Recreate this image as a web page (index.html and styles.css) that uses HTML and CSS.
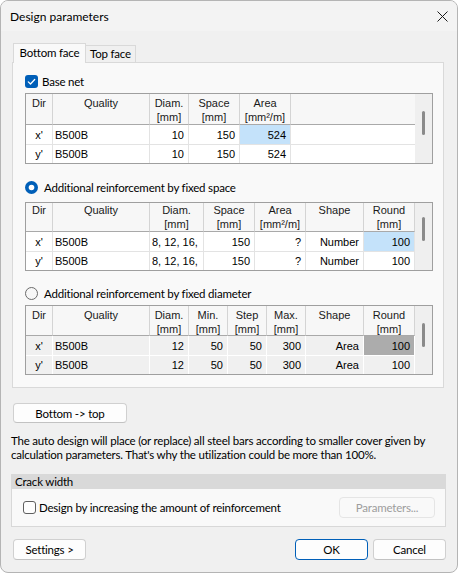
FILE: index.html
```html
<!DOCTYPE html>
<html>
<head>
<meta charset="utf-8">
<link rel="stylesheet" href="styles.css">
</head>
<body>
<div class="window">
  <div class="titlebar">
    <span class="title">Design parameters</span>
    <svg class="close" width="11" height="11" viewBox="0 0 11 11"><path d="M0.5 0.5 L10.5 10.5 M10.5 0.5 L0.5 10.5" stroke="#1a1a1a" stroke-width="1" fill="none"/></svg>
  </div>
  <div class="content">
    <div class="tabs">
      <div class="tab active">Bottom face</div>
      <div class="tab">Top face</div>
    </div>
    <div class="panel">
      <div class="opt opt-base">
        <span class="cb on"><svg width="13" height="13" viewBox="0 0 13 13"><path d="M3.3 6.9 L5.5 9 L9.7 4.5" stroke="#fff" stroke-width="1.3" fill="none" stroke-linecap="round" stroke-linejoin="round"/></svg></span>
        <span>Base net</span>
      </div>
      <div class="grid t1">
        <div class="sb"><div class="thumb"></div></div>
        <div class="h">Dir</div><div class="h">Quality</div><div class="h">Diam.<br>[mm]</div><div class="h">Space<br>[mm]</div><div class="h">Area<br>[mm²/m]</div><div class="h fill"></div>
        <div class="c ctr">x'</div><div class="c q">B500B</div><div class="c r">10</div><div class="c r">150</div><div class="c r sel">524</div><div class="c fill"></div>
        <div class="c ctr lr">y'</div><div class="c q lr">B500B</div><div class="c r lr">10</div><div class="c r lr">150</div><div class="c r lr">524</div><div class="c fill lr"></div>
      </div>
      <div class="opt opt-r1">
        <svg class="radio" width="13" height="13" viewBox="0 0 13 13"><circle cx="6.5" cy="6.5" r="6.5" fill="#005fb8"/><circle cx="6.5" cy="6.5" r="2.8" fill="#fff"/></svg>
        <span>Additional reinforcement by fixed space</span>
      </div>
      <div class="grid t2">
        <div class="sb"><div class="thumb"></div></div>
        <div class="h">Dir</div><div class="h">Quality</div><div class="h">Diam.<br>[mm]</div><div class="h">Space<br>[mm]</div><div class="h">Area<br>[mm²/m]</div><div class="h">Shape</div><div class="h">Round<br>[mm]</div>
        <div class="c ctr">x'</div><div class="c q">B500B</div><div class="c q">8, 12, 16,</div><div class="c r">150</div><div class="c r">?</div><div class="c r">Number</div><div class="c r sel">100</div>
        <div class="c ctr lr">y'</div><div class="c q lr">B500B</div><div class="c q lr">8, 12, 16,</div><div class="c r lr">150</div><div class="c r lr">?</div><div class="c r lr">Number</div><div class="c r lr">100</div>
      </div>
      <div class="opt opt-r2">
        <svg class="radio" width="13" height="13" viewBox="0 0 13 13"><circle cx="6.5" cy="6.5" r="6" fill="#f7f7f7" stroke="#6b6b6b" stroke-width="1"/></svg>
        <span>Additional reinforcement by fixed diameter</span>
      </div>
      <div class="grid t3">
        <div class="sb"><div class="thumb"></div></div>
        <div class="h">Dir</div><div class="h">Quality</div><div class="h">Diam.<br>[mm]</div><div class="h">Min.<br>[mm]</div><div class="h">Step<br>[mm]</div><div class="h">Max.<br>[mm]</div><div class="h">Shape</div><div class="h">Round<br>[mm]</div>
        <div class="c ctr">x'</div><div class="c q">B500B</div><div class="c r">12</div><div class="c r">50</div><div class="c r">50</div><div class="c r">300</div><div class="c r">Area</div><div class="c r sel">100</div>
        <div class="c ctr lr">y'</div><div class="c q lr">B500B</div><div class="c r lr">12</div><div class="c r lr">50</div><div class="c r lr">50</div><div class="c r lr">300</div><div class="c r lr">Area</div><div class="c r lr">100</div>
      </div>
    </div>
    <button class="btn btn-bt">Bottom -&gt; top</button>
    <p class="note">The auto design will place (or replace) all steel bars according to smaller cover given by<br>calculation parameters. That's why the utilization could be more than 100%.</p>
    <div class="group">
      <div class="group-head">Crack width</div>
      <div class="group-body">
        <span class="cb off"></span>
        <span class="group-label">Design by increasing the amount of reinforcement</span>
        <button class="btn btn-param" disabled>Parameters...</button>
      </div>
    </div>
    <div class="footer">
      <button class="btn btn-settings">Settings &gt;</button>
      <button class="btn btn-ok">OK</button>
      <button class="btn btn-cancel">Cancel</button>
    </div>
  </div>
</div>
</body>
</html>
```
FILE: styles.css
```css
* { box-sizing: border-box; }
html, body { margin: 0; padding: 0; }
body {
  width: 458px;
  height: 573px;
  background: #ffffff;
  font-family: Lato, "Noto Sans", sans-serif;
  font-size: 12px;
  color: #000;
}
.window {
  width: 458px;
  height: 573px;
  border: 1px solid #b4b4b4;
  border-radius: 8px;
  background: #f0f0f0;
  overflow: hidden;
  display: flex;
  flex-direction: column;
}
.titlebar {
  height: 30px;
  flex: none;
  display: flex;
  align-items: center;
  justify-content: space-between;
  padding: 0 9px 0 9px;
  background: #f3f3f3;
}
.title { font-size: 12px; }
.close { display: block; }
.content {
  padding: 12px 11px 0 10px;
  display: flex;
  flex-direction: column;
  font-size: 11.5px;
  letter-spacing: -0.2px;
}
.tabs {
  display: flex;
  align-items: flex-end;
  height: 19px;
  margin-left: 2px;
  position: relative;
  z-index: 1;
}
.tab {
  display: flex;
  align-items: center;
  justify-content: center;
  border: 1px solid #d9d9d9;
  border-bottom: none;
  background: #f0f0f0;
  height: 17px;
  width: 50px;
  border-left: none;
  padding-bottom: 1px;
}
.tab.active {
  height: 20px;
  width: 73px;
  margin-bottom: -1px;
  background: #f9f9f9;
  border-left: 1px solid #d9d9d9;
  padding-bottom: 2px;
}
.panel {
  margin: 0 2px 0 1px;
  border: 1px solid #d9d9d9;
  background: #f9f9f9;
  padding: 9px 10px 12px 12px;
  display: flex;
  flex-direction: column;
}
.opt {
  display: flex;
  align-items: center;
  height: 18px;
}
.opt-base { gap: 4px; }
.opt-r1 { margin-top: 14px; gap: 6px; }
.opt-r2 { margin-top: 13px; gap: 6px; }
.cb {
  width: 13px;
  height: 13px;
  border-radius: 3px;
  display: inline-block;
  flex: none;
}
.cb svg { display: block; }
.cb.on { background: #005fb8; }
.cb.off { border: 1px solid #5f5f5f; background: #fdfdfd; width: 13px; height: 13px; }
.radio { display: block; flex: none; }

.grid {
  display: grid;
  border: 1px solid #9f9f9f;
  font-family: "Liberation Sans", Arial, sans-serif;
  font-size: 11px;
  letter-spacing: 0;
  background: #fff;
}
.t1 { margin-top: 3px; grid-template-columns: 27px 97px 39px 51px 51px 1fr 17px; grid-template-rows: 31px 20px 18px; }
.t2 { margin-top: 6px; grid-template-columns: 27px 97px 54px 51px 51px 58px 51px 17px; grid-template-rows: 29px 20px 18px; }
.t3 { margin-top: 3px; grid-template-columns: 27px 97px 39px 39px 39px 39px 58px 51px 17px; grid-template-rows: 30px 20px 18px; }
.sb {
  grid-column: -2 / -1;
  grid-row: 1 / -1;
  background: #efefef;
  padding-left: 7px;
}
.thumb {
  width: 3px;
  height: 24px;
  background: #8a8a8a;
  border-radius: 1.5px;
  margin-top: 17px;
}
.t2 .thumb { margin-top: 14px; }
.h {
  background: #f7f7f7;
  border-right: 1px solid #d4d4d4;
  border-bottom: 1px solid #a9a9a9;
  text-align: center;
  line-height: 14px;
  padding-top: 2px;
  color: #1a1a1a;
}
.t2 .h { padding-top: 0; }
.h.fill { border-right: none; }
.c {
  border-right: 1px solid #e3e3e3;
  border-bottom: 1px solid #e3e3e3;
  display: flex;
  align-items: center;
  padding: 0 4px 0 2px;
  white-space: nowrap;
  color: #000;
}
.c.lr { border-bottom: none; }
.c.fill { border-right: none; }
.c.r { justify-content: flex-end; }
.c.ctr { justify-content: center; padding: 0; }
.c.sel { background: #c4e2fa; }
.t3 .c { background: #f0f0f0; border-color: #ffffff; }
.t3 .c.sel { background: #acacac; }

.btn {
  font-family: Lato, "Noto Sans", sans-serif;
  font-size: 11.5px;
  letter-spacing: -0.2px;
  color: #000;
  background: #fdfdfd;
  border: 1px solid #d0d0d0;
  border-bottom-color: #c2c2c2;
  border-radius: 4px;
  height: 20px;
  padding: 0;
  margin: 0;
}
.btn-bt {
  margin-top: 15px;
  margin-left: 2px;
  width: 114px;
  align-self: flex-start;
}
.note {
  margin: 11px 0 0 0;
  line-height: 14px;
  white-space: nowrap;
}
.group {
  margin-top: 12px;
  display: flex;
  flex-direction: column;
}
.group-head {
  height: 15px;
  line-height: 15px;
  background: #d9d9d9;
  padding-left: 4px;
}
.group-body {
  height: 38px;
  border: 1px solid #d8d8d8;
  border-top: none;
  background: #f9f9f9;
  display: flex;
  align-items: center;
  padding: 0 10px 0 11px;
}
.group-label { margin-left: 3px; }
.btn-param {
  margin-left: auto;
  width: 96px;
  height: 21px;
  color: #9d9d9d;
  background: #f9f9f9;
  border: 1px solid #e5e5e5;
}
.footer {
  margin-top: 12px;
  display: flex;
}
.footer .btn { width: 73px; height: 21px; }
.btn-settings { margin-left: 2px; }
.btn-ok { margin-left: auto; border: 1px solid #005fb8; }
.btn-cancel { margin-left: 5px; }
```
